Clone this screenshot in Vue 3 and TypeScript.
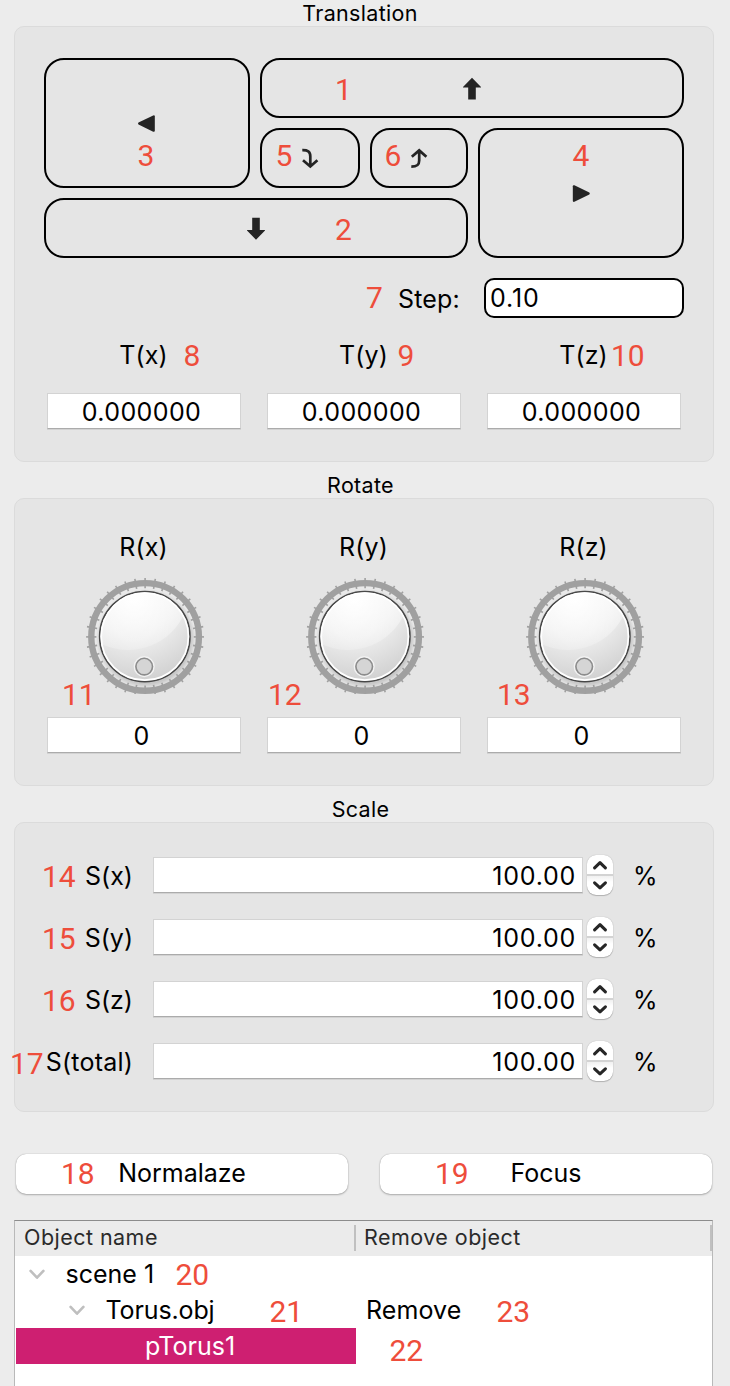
<script setup lang="ts">
import { ref } from 'vue'

interface Field { label: string; value: string; cls?: string }
interface Note { n: number; x: number; y: number }

const translate = ref<Field[]>([
  { label: 'T(x)', value: '0.000000' },
  { label: 'T(y)', value: '0.000000' },
  { label: 'T(z)', value: '0.000000' },
])
const rotate = ref<Field[]>([
  { label: 'R(x)', value: '0' },
  { label: 'R(y)', value: '0' },
  { label: 'R(z)', value: '0' },
])
const scale = ref<Field[]>([
  { label: 'S(x)', value: '100.00' },
  { label: 'S(y)', value: '100.00' },
  { label: 'S(z)', value: '100.00' },
  { label: 'S(total)', value: '100.00', cls: 'total' },
])
const step = ref('0.10')
const ticks = Array.from({ length: 36 }, (_, i) => i * 10)

// Numbered callouts pinned over the controls: x is the text origin, y the baseline.
const notes: Note[] = [
  { n: 1, x: 335, y: 100 },
  { n: 2, x: 335, y: 240 },
  { n: 3, x: 137.5, y: 166 },
  { n: 4, x: 572.5, y: 166 },
  { n: 5, x: 275.5, y: 166 },
  { n: 6, x: 384.5, y: 166 },
  { n: 7, x: 366, y: 308 },
  { n: 8, x: 183.5, y: 366 },
  { n: 9, x: 397.5, y: 366 },
  { n: 10, x: 611, y: 366 },
  { n: 11, x: 62, y: 705 },
  { n: 12, x: 268, y: 705 },
  { n: 13, x: 497, y: 705 },
  { n: 14, x: 42, y: 887 },
  { n: 15, x: 42, y: 949 },
  { n: 16, x: 42, y: 1011 },
  { n: 17, x: 10, y: 1074 },
  { n: 18, x: 61, y: 1184 },
  { n: 19, x: 435, y: 1184 },
  { n: 20, x: 175.5, y: 1285 },
  { n: 21, x: 269.5, y: 1322 },
  { n: 22, x: 389.5, y: 1361 },
  { n: 23, x: 496.5, y: 1322 },
]
</script>

<template>
  <main class="window">
    <h2 class="title">Translation</h2>
    <section class="panel translation">
      <div class="pad">
        <button class="key left">
          <svg class="glyph" viewBox="0 0 24 24"><path d="M3 12.5 Q3 11.8 4 11.3 L18.2 4.4 Q19.8 3.9 19.8 5.3 V19.8 Q19.8 21.2 18.2 20.7 L4 13.7 Q3 13.2 3 12.5Z" class="fill" /></svg>
        </button>
        <button class="key up">
          <svg class="glyph" viewBox="0 0 24 24"><path d="M12 1.7 L21 10.9 V11.4 H15.8 V23.6 H8.2 V11.4 H3 V10.9Z" class="fill" /></svg>
        </button>
        <button class="key in">
          <svg class="glyph" viewBox="0 0 24 24"><path d="M4.3 4.2 C9.6 4.1 12.3 5.2 12.3 10.3 V20.2 M5 14.2 L12.3 20.5 L19.4 14.2" class="line" /></svg>
        </button>
        <button class="key out">
          <svg class="glyph" viewBox="0 0 24 24"><path d="M4.3 20.7 C9.6 20.7 12.2 19.5 12.2 14.5 V5 M4.8 10.8 L12.2 4.4 L19.4 10.8" class="line" /></svg>
        </button>
        <button class="key right">
          <svg class="glyph" viewBox="0 0 24 24"><path d="M20.8 12.5 Q20.8 13.2 19.8 13.7 L5.4 20.8 Q3.8 21.3 3.8 19.8 V5.3 Q3.8 3.8 5.4 4.3 L19.8 11.3 Q20.8 11.8 20.8 12.5Z" class="fill" /></svg>
        </button>
        <button class="key down">
          <svg class="glyph" viewBox="0 0 24 24"><path d="M12 23.7 L3 14.5 V14 H8.2 V1.7 H15.8 V14 H21 V14.5Z" class="fill" /></svg>
        </button>
      </div>
      <div class="step">
        <span class="text step-label">Step:</span>
        <div class="step-input text">{{ step }}</div>
      </div>
      <div class="columns">
        <div v-for="f in translate" :key="f.label" class="column">
          <span class="text label">{{ f.label }}</span>
          <div class="input centered text">{{ f.value }}</div>
        </div>
      </div>
    </section>

    <h2 class="title spaced">Rotate</h2>
    <section class="panel rotation">
      <div class="columns">
        <div v-for="f in rotate" :key="f.label" class="column">
          <span class="text label">{{ f.label }}</span>
          <svg class="dial" viewBox="0 0 120 120">
            <defs>
              <radialGradient id="well" cx="62" cy="62" r="52" gradientUnits="userSpaceOnUse">
                <stop offset="0.86" stop-color="#c8c8c8" />
                <stop offset="0.96" stop-color="#e9e9e9" />
              </radialGradient>
              <radialGradient id="face" cx="50" cy="22" r="84" gradientUnits="userSpaceOnUse">
                <stop offset="0" stop-color="#ffffff" />
                <stop offset="0.45" stop-color="#f0f0f0" />
                <stop offset="1" stop-color="#d0d0d0" />
              </radialGradient>
              <linearGradient id="sheen" x1="0" y1="14" x2="0" y2="74" gradientUnits="userSpaceOnUse">
                <stop offset="0" stop-color="#fff" stop-opacity="0.6" />
                <stop offset="1" stop-color="#fff" stop-opacity="0.2" />
              </linearGradient>
              <clipPath id="knob"><circle cx="60.8" cy="59.6" r="44" /></clipPath>
              <clipPath id="bounds"><rect x="0" y="0" width="120" height="117" /></clipPath>
            </defs>
            <circle cx="61" cy="60" r="51.5" fill="url(#well)" />
            <g clip-path="url(#bounds)">
              <circle cx="61.1" cy="59.9" r="53.8" fill="none" stroke="#a0a0a0" stroke-width="6.4" />
              <path v-for="t in ticks" :key="t" d="M61.1 0.9 V11.2" stroke="#a0a0a0" stroke-width="1.6" :transform="`rotate(${t} 61.1 59.9)`" />
            </g>
            <circle cx="60.8" cy="59.6" r="45.2" fill="url(#face)" stroke="#484848" stroke-width="1.5" />
            <circle cx="44" cy="11.3" r="61.7" fill="url(#sheen)" clip-path="url(#knob)" />
            <circle cx="60.8" cy="59.6" r="43.6" fill="none" stroke="#fff" stroke-width="1.7" />
            <circle cx="60.2" cy="89.6" r="9.8" fill="none" stroke="#f2f2f2" stroke-width="1.5" />
            <circle cx="60.2" cy="89.6" r="8.3" fill="#d5d5d5" stroke="#8c8c8c" stroke-width="1.6" />
          </svg>
          <div class="input centered text">{{ f.value }}</div>
        </div>
      </div>
    </section>

    <h2 class="title spaced">Scale</h2>
    <section class="panel scaling">
      <div v-for="f in scale" :key="f.label" class="scale-row">
        <span class="text scale-label" :class="f.cls">{{ f.label }}</span>
        <div class="input wide text">{{ f.value }}</div>
        <div class="stepper">
          <svg viewBox="0 0 26 40">
            <defs>
              <linearGradient id="lower" x1="0" y1="21" x2="0" y2="27" gradientUnits="userSpaceOnUse">
                <stop offset="0" stop-color="#f0f0f0" />
                <stop offset="1" stop-color="#ffffff" />
              </linearGradient>
            </defs>
            <rect x="0" y="21" width="26" height="6" fill="url(#lower)" />
            <rect x="0" y="19" width="26" height="2" fill="#d3d3d3" />
            <path d="M7.6 12.8 L13 7.6 L18.4 12.8 M7.6 27.8 L13 32.8 L18.4 27.8" class="chevron" />
          </svg>
        </div>
        <span class="text percent">%</span>
      </div>
    </section>

    <div class="actions">
      <button class="action text">Normalaze</button>
      <button class="action text">Focus</button>
    </div>

    <div class="tree">
      <div class="tree-head">
        <span class="head-cell first">Object name</span>
        <span class="head-cell second">Remove object</span>
      </div>
      <div class="tree-row">
        <div class="cell scene">
          <svg class="twisty" viewBox="0 0 16 12"><path d="M1.6 2.9 L8 9.7 L14.4 2.9" /></svg>
          <span class="text">scene 1</span>
        </div>
      </div>
      <div class="tree-row">
        <div class="cell object">
          <svg class="twisty" viewBox="0 0 16 12"><path d="M1.6 2.9 L8 9.7 L14.4 2.9" /></svg>
          <span class="text object-name">Torus.obj</span>
        </div>
        <span class="text remove">Remove</span>
      </div>
      <div class="tree-row">
        <div class="cell selected"><span class="text">pTorus1</span></div>
      </div>
    </div>

    <span
      v-for="a in notes"
      :key="a.n"
      class="note"
      :style="{ left: a.x + 'px', top: a.y - 25 + 'px' }"
    >{{ a.n }}</span>
  </main>
</template>

<style>
body { margin: 0; background: #ececec; }
</style>

<style scoped>
.window {
  position: relative;
  box-sizing: border-box;
  width: 730px;
  height: 1386px;
  padding: 0 16px 0 14px;
  overflow: hidden;
  background: #ececec;
  color: #000;
  font-family: Inter, "Liberation Sans", sans-serif;
}
.window * { box-sizing: border-box; }
button { margin: 0; padding: 0; font-family: inherit; color: inherit; }
.text {
  font-size: 25px;
  line-height: 26px;
  white-space: nowrap;
}
.title {
  margin: 0;
  padding-right: 8px;
  height: 26px;
  font-size: 21.5px;
  font-weight: 400;
  line-height: 26px;
  letter-spacing: 0.32px;
  text-align: center;
}
.title.spaced { margin-top: 10px; padding-right: 7px; }
.panel {
  width: 700px;
  background: #e5e5e5;
  border: 1px solid #dbdbdb;
  border-radius: 10px;
}
.translation { height: 436px; padding: 31px 29px 0; }
.rotation { height: 288px; padding: 35px 29px 0; }
.scaling { height: 290px; padding: 31px 0 0; display: flex; flex-direction: column; gap: 20px; }

.pad {
  display: grid;
  grid-template-columns: 206px 100px 98px 206px;
  grid-template-rows: repeat(3, 60px);
  gap: 10px;
}
.key {
  display: flex;
  align-items: center;
  justify-content: center;
  background: transparent;
  border: 2px solid #000;
  border-radius: 20px;
}
.left { grid-area: 1 / 1 / 3 / 2; }
.up { grid-area: 1 / 2 / 2 / 5; }
.in { grid-area: 2 / 2 / 3 / 3; }
.out { grid-area: 2 / 3 / 3 / 4; }
.right { grid-area: 2 / 4 / 4 / 5; }
.down { grid-area: 3 / 1 / 4 / 4; }
.glyph { width: 24px; height: 24px; }
.fill { fill: #242424; }
.line { fill: none; stroke: #242424; stroke-width: 2.7; }

.step {
  display: flex;
  justify-content: flex-end;
  align-items: center;
  gap: 24px;
  height: 40px;
  margin-top: 20px;
}
.step-label { letter-spacing: 0.2px; padding-top: 1px; }
.step-input {
  width: 200px;
  height: 40px;
  padding: 5px 0 0 4px;
  background: #fff;
  border: 2px solid #000;
  border-radius: 10px;
  letter-spacing: 0.9px;
}

.columns { display: flex; gap: 26px; padding-left: 3px; }
.translation .columns { margin-top: 24px; }
.column { display: flex; flex-direction: column; align-items: center; width: 194px; }
.label { padding-right: 1px; letter-spacing: 0.1px; }
.translation .label { margin-bottom: 25px; }
.input {
  height: 36px;
  line-height: 36px;
  background: #fff;
  border: 1px solid #d3d3d3;
  border-bottom-color: #ababab;
  box-shadow: 0 1px 0 #d2d2d2;
}
.centered { width: 194px; padding-right: 5px; text-align: center; letter-spacing: 0.4px; }
.dial { width: 120px; height: 120px; margin: 17px 0 20px; }

.scale-row { display: flex; align-items: center; height: 42px; }
.scale-label { width: 118px; padding-top: 2px; text-align: right; }
.total { letter-spacing: 0.2px; }
.wide {
  width: 430px;
  margin-left: 20px;
  padding-right: 6px;
  text-align: right;
  letter-spacing: 0.75px;
}
.stepper {
  width: 26px;
  height: 40px;
  margin-left: 4px;
  overflow: hidden;
  background: #fff;
  border-radius: 9px;
  box-shadow: 0 0 1px rgba(0, 0, 0, 0.3), 0 1px 1px rgba(0, 0, 0, 0.2);
}
.stepper svg { display: block; width: 26px; height: 40px; }
.chevron { fill: none; stroke: #262626; stroke-width: 3.1; stroke-linecap: round; stroke-linejoin: round; }
.percent { margin-left: 20px; padding-top: 2px; }

.actions { display: flex; gap: 32px; margin: 42px 0 0 2px; }
.action {
  width: 332px;
  height: 40px;
  padding-bottom: 2px;
  background: #fff;
  border: 0;
  border-radius: 10px;
  box-shadow: 0 0 1px rgba(0, 0, 0, 0.35), 0 1px 2px rgba(0, 0, 0, 0.25);
}

.tree {
  width: 699px;
  height: 180px;
  margin-top: 26px;
  background: #fff;
  border: 1px solid #b9b9b9;
  border-top-color: #8c8c8c;
}
.tree-head { display: flex; align-items: flex-start; height: 35px; padding-top: 4px; background: #ebebeb; }
.head-cell {
  height: 26px;
  font-size: 21.5px;
  line-height: 25px;
  letter-spacing: 0.46px;
  color: #2a2a2a;
  border-right: 2px solid #c0c0c0;
  white-space: nowrap;
}
.head-cell.first { width: 341px; padding-left: 9px; }
.head-cell.second { width: 356px; padding-left: 8px; }
.tree-row { display: flex; align-items: center; height: 36px; }
.cell { display: flex; align-items: center; width: 340px; height: 36px; margin-left: 1px; }
.scene { padding-left: 13px; }
.object { padding-left: 53px; }
.object-name { letter-spacing: -0.12px; }
.twisty { width: 16px; height: 12px; margin-right: 20.5px; }
.twisty path { fill: none; stroke: #bfbfbf; stroke-width: 2.6; stroke-linecap: round; stroke-linejoin: round; }
.selected { padding-left: 129px; background: #ce1f71; color: #fff; }
.remove { padding-left: 10px; letter-spacing: 0.1px; }

.note {
  position: absolute;
  font-family: Roboto, "Liberation Sans", sans-serif;
  font-size: 30px;
  line-height: 30px;
  color: #ee4d3b;
  white-space: nowrap;
}
</style>
